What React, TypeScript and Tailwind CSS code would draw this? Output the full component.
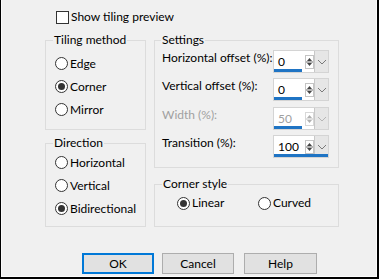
import React from "react";

// Tiling options dialog (Windows 10 look): flow layout with fieldsets as group boxes.

const FONT = { fontFamily: 'Lato, "Segoe UI", sans-serif' };

function Radio({ label, checked }: { label: string; checked?: boolean }) {
  return (
    <div className="flex items-center gap-[2px]">
      <span className="flex h-[13px] w-[13px] items-center justify-center rounded-full border border-[#333] bg-white">
        {checked && <span className="h-[7px] w-[7px] rounded-full bg-[#333]" />}
      </span>
      <span>{label}</span>
    </div>
  );
}

function SpinArrows({ disabled }: { disabled?: boolean }) {
  const c = disabled ? "#b0b0b0" : "#444";
  return (
    <svg width="9" height="14" viewBox="0 0 9 14">
      <rect x="0.5" y="0.5" width="8" height="13" fill="none" stroke={disabled ? "#d8d8d8" : "#c4c4c4"} />
      <path d="M2 6 L4.5 3 L7 6 Z" fill={c} />
      <path d="M2 8 L4.5 11 L7 8 Z" fill={c} />
      <line x1="1" y1="7" x2="8" y2="7" stroke={c} strokeWidth="0.8" />
    </svg>
  );
}

function SpinBox({ value, full, disabled }: { value: string; full?: boolean; disabled?: boolean }) {
  return (
    <div className="relative flex h-[23px] w-[56px] border border-[#d4d4d4] bg-white">
      <div className={`flex w-[30px] items-center pl-[4px] ${disabled ? "text-[#a0a0a0]" : "text-black"}`}>
        {value}
      </div>
      <div className="flex w-[10px] items-center justify-center">
        <SpinArrows disabled={disabled} />
      </div>
      <div className="flex flex-1 items-center justify-center border-l border-[#c8c8c8] bg-[#e6e6e6]">
        <svg width="10" height="6" viewBox="0 0 10 6">
          <path d="M1 1 L5 5 L9 1" fill="none" stroke={disabled ? "#b5b5b5" : "#7a7a7a"} strokeWidth="1" />
        </svg>
      </div>
      <div className={`absolute bottom-0 left-0 h-[3px] bg-[#1f74c4] ${full ? "w-[54px]" : "w-[28px]"}`} />
    </div>
  );
}

function SettingRow({ label, value, full, disabled, mt }: { label: string; value: string; full?: boolean; disabled?: boolean; mt: string }) {
  return (
    <div className={`flex ${mt}`}>
      <div className={`w-[111px] whitespace-nowrap leading-[16px] ${disabled ? "text-[#a0a0a0]" : ""}`}>{label}</div>
      <SpinBox value={value} full={full} disabled={disabled} />
    </div>
  );
}

function Button({ label, primary, w }: { label: string; primary?: boolean; w: string }) {
  return (
    <div
      className={`flex h-[21px] ${w} items-center justify-center bg-[#e1e1e1] ${
        primary ? "border-2 border-[#0078d7]" : "border border-[#adadad]"
      }`}
    >
      {label}
    </div>
  );
}

export default function App() {
  return (
    <div
      style={FONT}
      className="h-[279px] w-[379px] border-b-2 border-l border-r-2 border-black bg-[#f0f0f0] text-[12px] leading-[16px] text-black"
    >
      <div className="h-full border-b border-l border-r border-[#fbfbfb]">
        {/* checkbox */}
        <div className="flex items-center gap-[2px] pl-[54px] pt-[9px]">
          <span className="h-[13px] w-[13px] border border-[#333] bg-white" />
          <span>Show tiling preview</span>
        </div>

        <div className="mt-[7px] flex gap-[8px] pl-[43px]">
          {/* left column */}
          <div className="flex w-[101px] flex-col">
            <fieldset className="h-[98px] border border-[#dcdcdc] pl-[9px] pt-[4px]">
              <legend className="-ml-[2px] px-[1px]">Tiling method</legend>
              <div className="flex h-[23px] items-center"><Radio label="Edge" /></div>
              <div className="flex h-[23px] items-center"><Radio label="Corner" checked /></div>
              <div className="flex h-[23px] items-center"><Radio label="Mirror" /></div>
            </fieldset>
            <fieldset className="mt-[5px] h-[92px] border border-[#dcdcdc] pl-[9px]">
              <legend className="-ml-[2px] px-[1px]">Direction</legend>
              <div className="flex h-[23px] items-center"><Radio label="Horizontal" /></div>
              <div className="flex h-[23px] items-center"><Radio label="Vertical" /></div>
              <div className="flex h-[23px] items-center"><Radio label="Bidirectional" checked /></div>
            </fieldset>
          </div>

          {/* right column */}
          <div className="flex w-[185px] flex-col">
            <fieldset className="h-[136px] border border-[#dcdcdc] pl-[7px]">
              <legend className="-ml-[1px] px-[1px]">Settings</legend>
              <SettingRow label="Horizontal offset (%):" value="0" mt="mt-[2px]" />
              <SettingRow label="Vertical offset (%):" value="0" mt="mt-[5px]" />
              <SettingRow label="Width (%):" value="50" disabled mt="mt-[6px]" />
              <SettingRow label="Transition (%):" value="100" full mt="mt-[5px]" />
            </fieldset>
            <fieldset className="mt-[8px] h-[51px] border border-[#dcdcdc] pl-[22px]">
              <legend className="-ml-[15px] px-[1px]">Corner style</legend>
              <div className="flex h-[22px] items-center">
                <div className="w-[81px]"><Radio label="Linear" checked /></div>
                <Radio label="Curved" />
              </div>
            </fieldset>
          </div>
        </div>

        {/* buttons */}
        <div className="mt-[26px] flex gap-[8px] pl-[80px]">
          <Button label="OK" primary w="w-[72px]" />
          <Button label="Cancel" w="w-[72px]" />
          <div className="ml-[2px]">
            <Button label="Help" w="w-[73px]" />
          </div>
        </div>
      </div>
    </div>
  );
}
